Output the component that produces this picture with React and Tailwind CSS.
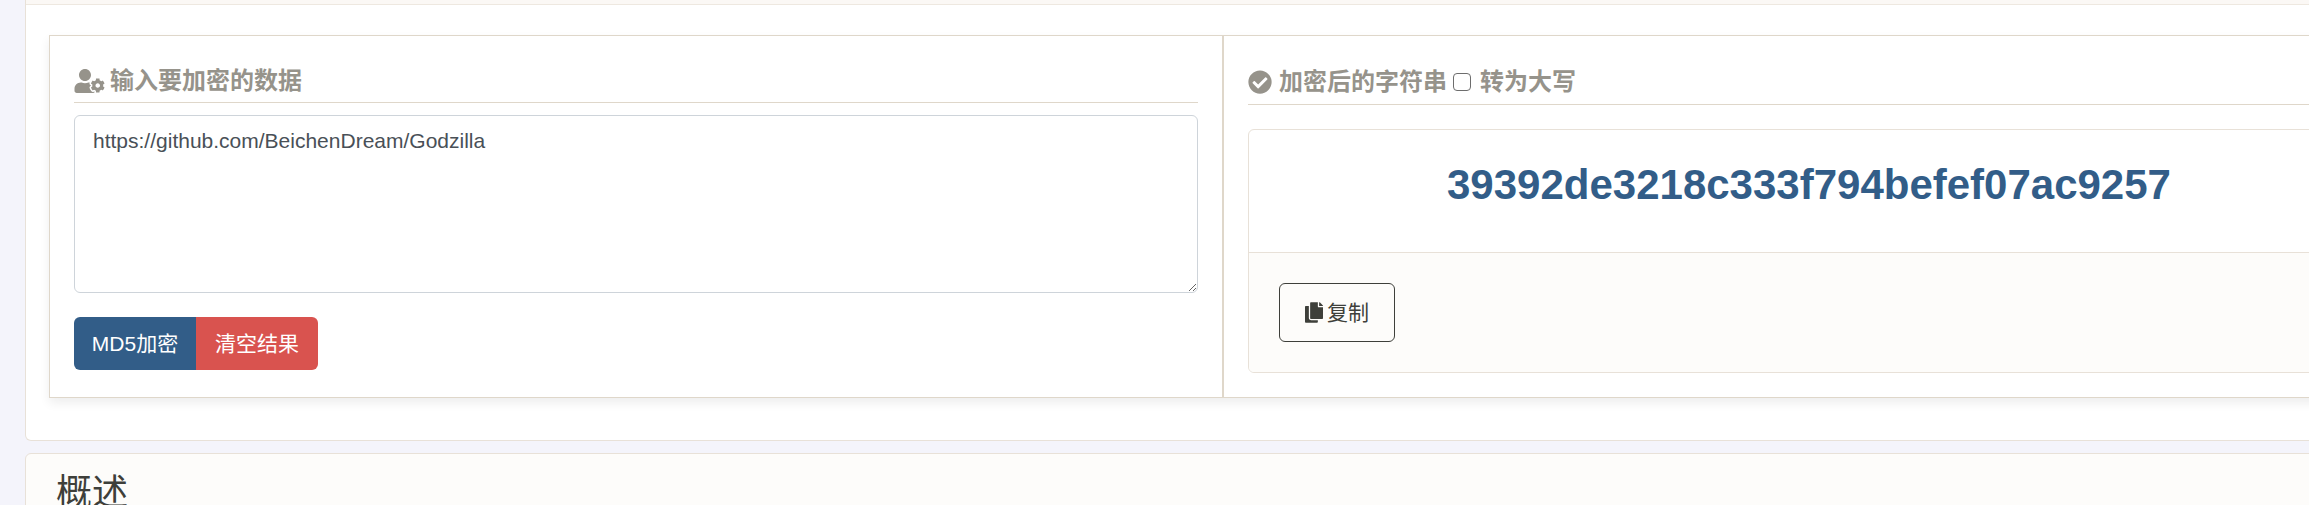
import { FaUserCog, FaCheckCircle, FaCopy } from 'react-icons/fa';

const font = { fontFamily: '"Liberation Sans", "Noto Sans CJK SC", sans-serif' };

export default function App() {
  return (
    <div style={font} className="h-[505px] w-[2309px] overflow-hidden bg-[#f4f4fb] pl-[25px] text-[#3e3f3a]">
      <div className="w-[2400px] rounded-b-md border border-t-0 border-[#e8e1d8] bg-white pb-[42px]">
        <div className="h-[5px] border-b border-[#eee8e0] bg-[#fbf8f5]"></div>
        <div className="ml-[23px] mt-[30px] flex border border-[#dfd7ca] shadow-[0_5px_10px_rgba(0,0,0,0.07)]">
          <div className="w-[1174px] border-r-2 border-[#dfd7ca] px-6 pb-[27px]">
            <h5 className="flex h-[67px] items-center gap-[5px] border-b border-[#dfd7ca] pt-[23px] text-[24px] font-bold text-[#96938b]">
              <FaUserCog className="h-[24px] w-[31px]" />
              <span>输入要加密的数据</span>
            </h5>
            <textarea
              readOnly
              className="mt-3 block h-[178px] w-full resize-y rounded-md border border-[#ced4da] px-[18px] py-[9px] text-[21px] leading-[32px] text-[#495057] outline-none"
              defaultValue="https://github.com/BeichenDream/Godzilla"
            />
            <div className="mt-6 flex h-[53px] text-[21px] text-white">
              <button className="w-[122px] rounded-l-md bg-[#325d88]">MD5加密</button>
              <button className="w-[122px] rounded-r-md bg-[#d9534f]">清空结果</button>
            </div>
          </div>
          <div className="flex-1 px-6">
            <h5 className="flex h-[69px] items-center gap-[7px] border-b border-[#dfd7ca] pt-[23px] text-[24px] font-bold text-[#96938b]">
              <FaCheckCircle className="h-[24px] w-[24px]" />
              <span>加密后的字符串</span>
              <span className="-ml-px mr-[2px] h-[18px] w-[18px] rounded-[4px] border border-[#6d6d6d] bg-white"></span>
              <span>转为大写</span>
            </h5>
            <div className="mt-6 overflow-hidden rounded-md border border-[#e8e1d8]">
              <div className="h-[122px] pl-[198px] pt-[28px] text-[42px] font-bold leading-[54px] text-[#325d88]">
                39392de3218c333f794befef07ac9257
              </div>
              <div className="h-[120px] border-t border-[#e8e1d8] bg-[#fdfcfa] pl-[30px] pt-[30px]">
                <button className="flex h-[59px] w-[116px] items-center justify-center gap-1 rounded-md border border-[#3e3f3a] text-[21px]">
                  <FaCopy className="h-[21px] w-[18px]" />
                  <span>复制</span>
                </button>
              </div>
            </div>
          </div>
        </div>
      </div>
      <div className="mt-3 h-[100px] w-[2400px] rounded-t-md border border-[#e8e1d8] bg-[#fdfcfa] pl-[30px] pt-[14px]">
        <h3 className="text-[36px] leading-[50px]">概述</h3>
      </div>
    </div>
  );
}
